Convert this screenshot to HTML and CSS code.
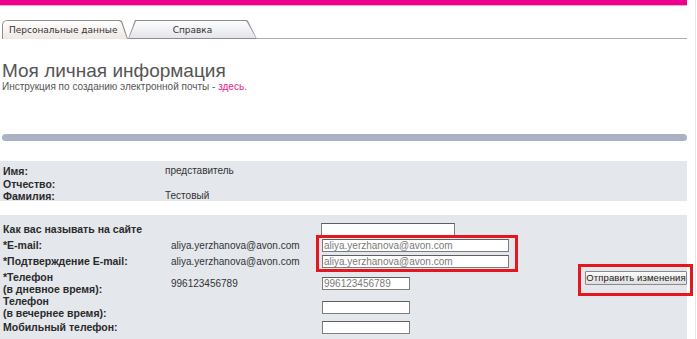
FILE: index.html
```html
<!DOCTYPE html>
<html lang="ru">
<head>
  <meta charset="UTF-8" />
  <title>Моя личная информация</title>
  <link rel="stylesheet" href="styles.css">
</head>
<body>
  <div class="frame">
    <div class="page">
      <div class="topbar"></div>

      <!-- Tabs -->
      <div class="tabs">
        <div class="tab tab-active"><span>Персональные данные</span></div>
        <div class="tab tab-help"><span>Справка</span></div>
        <div class="tabs-rest"></div>
      </div>

      <h1 class="title">Моя личная информация</h1>
      <p class="note">Инструкция по созданию электронной почты - <a href="#">здесь.</a></p>

      <div class="divider"></div>

      <!-- Name block -->
      <div class="box box-names">
        <div class="label">Имя:</div><div class="value">представитель</div>
        <div class="label">Отчество:</div><div class="value"></div>
        <div class="label">Фамилия:</div><div class="value">Тестовый</div>
      </div>

      <!-- Contacts block -->
      <div class="box box-contacts">
        <div class="label">Как вас называть на сайте</div>
        <div class="value"></div>
        <div class="field"><input type="text" class="input input-nick"></div>
        <div class="side"></div>

        <div class="label">*E-mail:</div>
        <div class="value">aliya.yerzhanova@avon.com</div>
        <div class="field"><input type="text" class="input input-mail" value="aliya.yerzhanova@avon.com"></div>
        <div class="side"></div>

        <div class="label">*Подтверждение E-mail:</div>
        <div class="value">aliya.yerzhanova@avon.com</div>
        <div class="field"><input type="text" class="input input-mail" value="aliya.yerzhanova@avon.com"></div>
        <div class="side"></div>

        <div class="label label-tall">*Телефон<br>(в дневное время):</div>
        <div class="value value-tall">996123456789</div>
        <div class="field field-tall"><input type="text" class="input input-phone" value="996123456789"></div>
        <div class="side"><button class="submit">Отправить изменения</button></div>

        <div class="label">Телефон<br>(в вечернее время):</div>
        <div class="value"></div>
        <div class="field"><input type="text" class="input input-phone"></div>
        <div class="side"></div>

        <div class="label">Мобильный телефон:</div>
        <div class="value"></div>
        <div class="field"><input type="text" class="input input-phone"></div>
        <div class="side"></div>

        <!-- red annotation frames -->
        <div class="mark mark-mail"></div>
        <div class="mark mark-submit"></div>
      </div>
    </div>
  </div>
</body>
</html>
```

FILE: styles.css
```css
/* Reset */
* {
  margin: 0;
  padding: 0;
  box-sizing: border-box;
}

body {
  background: #ffffff;
  font-family: 'Liberation Sans', Arial, sans-serif;
  color: #222;
}

/* Outer frame with the thin line on the right */
.frame {
  width: 696px;
  min-height: 100vh;
  border-right: 1px solid #e6e6e6;
}

.page {
  width: 687px;
}

.topbar {
  height: 6px;
  background: #ec008c;
  border-bottom: 1px solid #f6a6d2;
}

/* Tabs */
.tabs {
  display: flex;
  align-items: flex-end;
  margin-top: 14px;
  padding-left: 2px;
  height: 19px;
}

.tab {
  height: 19px;
  background: #8e8e8e;
  padding: 1px 1px 0 1px;
}

.tab span {
  display: flex;
  align-items: center;
  height: 100%;
  font-family: 'DejaVu Sans', sans-serif;
  font-size: 9px;
  color: #333;
}

.tab-active {
  width: 126px;
  clip-path: polygon(0 100%, 0 4px, 1px 2px, 3px 0.5px, 6px 0, calc(100% - 8px) 0, calc(100% - 6px) 1px, 100% 100%);
}

.tab-active span {
  padding-left: 6px;
  background: linear-gradient(#ffffff, #efe7e3);
  clip-path: polygon(0 100%, 0 3px, 1px 1px, 3px 0, calc(100% - 8px) 0, calc(100% - 6px) 1px, 100% 100%);
}

.tab-help {
  width: 129px;
  padding-bottom: 1px;
  clip-path: polygon(0 100%, 7px 0, calc(100% - 10px) 0, calc(100% - 9px) 1px, 100% 100%);
}

.tab-help span {
  justify-content: center;
  background: linear-gradient(#fdfdfe, #e3e5ea);
  clip-path: polygon(0 100%, 7px 0, calc(100% - 10px) 0, calc(100% - 9px) 1px, 100% 100%);
}

.tabs-rest {
  flex: 1;
  height: 1px;
  background: #acacac;
}

/* Heading */
.title {
  margin-top: 21px;
  padding-left: 2px;
  font-size: 19px;
  font-weight: normal;
  line-height: 21px;
  color: #555;
}

.note {
  padding-left: 2px;
  font-size: 10px;
  line-height: 11px;
  color: #555;
}

.note a {
  color: #e4228c;
  text-decoration: none;
}

.divider {
  margin: 42px 0 0 2px;
  height: 7px;
  border-radius: 4px;
  background: #aab2c4;
}

/* Form blocks */
.box {
  background: #e4e7ec;
  font-size: 10px;
}

.label {
  font-size: 10.5px;
  font-weight: bold;
  color: #2a2a2a;
  line-height: 12px;
}

.value {
  color: #333;
}

.box-names {
  margin-top: 20px;
  height: 40px;
  padding: 4px 0 0 3px;
  display: grid;
  grid-template-columns: 162px 1fr;
  line-height: 12.5px;
}

.box-names .label {
  line-height: 12.5px;
}

.box-contacts {
  position: relative;
  margin-top: 14px;
  padding: 6px 0 6px 3px;
  display: grid;
  grid-template-columns: 168px 150px 1fr auto;
  grid-auto-rows: minmax(16px, auto);
  align-items: center;
}

.label-tall {
  padding-top: 2px;
}

.value-tall,
.field-tall {
  padding-top: 2px;
}

.field {
  display: flex;
}

.input {
  height: 13px;
  border: 1px solid #7d7d7d;
  border-top-color: #5f5f5f;
  background: #fff;
  font-family: 'Liberation Sans', Arial, sans-serif;
  font-size: 10px;
  line-height: 11px;
  color: #7a7a7a;
  padding: 0 1px;
  outline: none;
}

.input-nick {
  width: 134px;
}

.input-mail {
  width: 187px;
  margin-left: 1px;
}

.input-phone {
  width: 88px;
  margin-left: 1px;
}

.side {
  align-self: start;
  display: flex;
  justify-content: flex-end;
}

.submit {
  margin-top: 2px;
  width: 102px;
  height: 14px;
  padding: 0;
  border: 1px solid #8a8a8a;
  border-radius: 1px;
  background: linear-gradient(#fbfbfb, #dedede);
  font-family: 'Liberation Sans', Arial, sans-serif;
  font-size: 9.5px;
  line-height: 12px;
  white-space: nowrap;
  color: #222;
  letter-spacing: 0.1px;
}

/* Red annotation frames drawn over the form */
.mark {
  position: absolute;
  border: 3px solid #e4161e;
}

.mark-mail {
  left: 316px;
  top: 20px;
  width: 202px;
  height: 37px;
}

.mark-submit {
  left: 578px;
  top: 49px;
  width: 115px;
  height: 32px;
}
```
